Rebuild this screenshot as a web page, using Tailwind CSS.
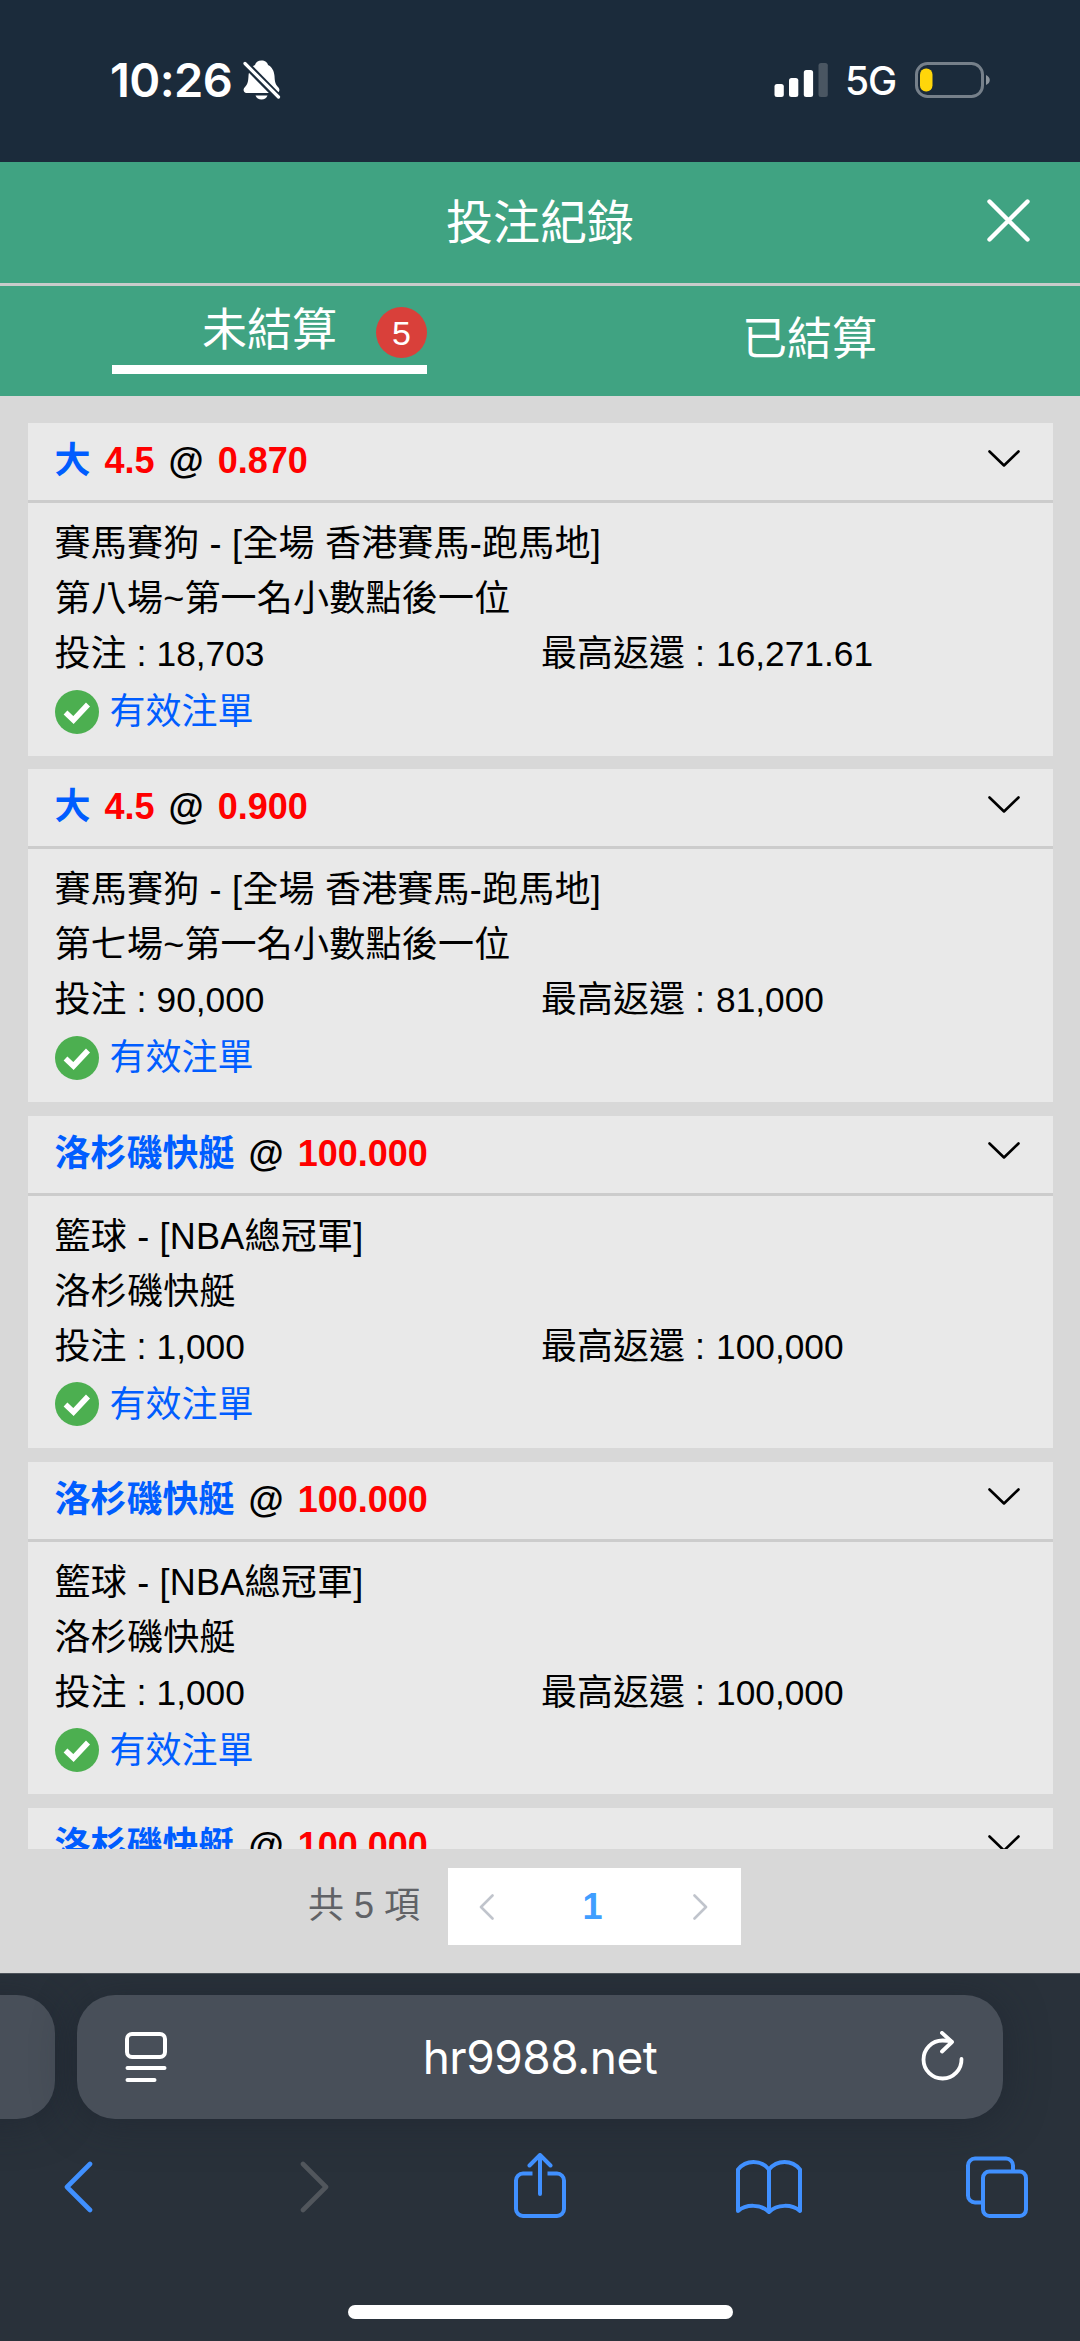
<!DOCTYPE html>
<html lang="zh-Hant">
  <head>
    <meta charset="utf-8" />
    <meta name="viewport" content="width=device-width, initial-scale=1.0" />
    <title>投注紀錄</title>
    <script src="https://cdn.jsdelivr.net/npm/@tailwindcss/browser@4"></script>
  </head>
  <body
    class="flex h-[2341px] w-[1080px] flex-col overflow-hidden bg-[#d8d8d8] font-['Liberation_Sans','Noto_Sans_CJK_TC',sans-serif] text-black"
  >
    <!-- Status bar -->
    <div
      class="flex h-[162px] shrink-0 items-center bg-[#1b2b3b] pr-[90px] pb-[2px] pl-[110px] text-white"
    >
      <span
        class="w-[133px] font-['Inter',sans-serif] text-[47px] font-semibold tracking-[-0.600px] whitespace-nowrap"
        >10:26</span
      >
      <svg class="h-[40px] w-[38px]" viewBox="0 0 38 40" fill="none">
        <path
          d="M18.500 0.500c-3.500 0-6 2-6.500 4.500-4 2-6.200 6-6.500 11-.3 6-1 8.500-3.500 11-2.500 2.500-1.500 6 1.500 6h30c3 0 4-3.500 1.500-6-2.500-2.500-3.200-5-3.500-11-.3-5-2.500-9-6.500-11-.5-2.500-3-4.500-6.500-4.500z"
          fill="#fff"
        />
        <path d="M12.500 35.500h12c-1 2.500-3 4-6 4s-5-1.500-6-4z" fill="#fff" />
        <path d="M-1 0.500L38 40" stroke="#1b2b3b" stroke-width="7.500" />
        <path
          d="M2 3.500L35.500 37"
          stroke="#fff"
          stroke-width="3.200"
          stroke-linecap="round"
        />
      </svg>
      <div class="ml-auto flex items-center">
        <svg class="h-[36px] w-[54px]" viewBox="0 0 54 36" fill="#fff">
          <rect x="0.500" y="22" width="9.300" height="13" rx="2.500" />
          <rect x="15" y="16" width="9.300" height="19" rx="2.500" />
          <rect x="29.800" y="8" width="9.300" height="27" rx="2.500" />
          <rect x="44.500" y="1" width="9.300" height="34" rx="2.500" fill="#4a5662" />
        </svg>
        <span
          class="mt-[3px] ml-[17px] w-[70px] font-['Inter',sans-serif] text-[39px] font-medium tracking-[-1px]"
          >5G</span
        >
        <svg class="h-[36px] w-[75px]" viewBox="0 0 75 36" fill="none">
          <rect x="1.500" y="1.500" width="66" height="33" rx="11" stroke="#76808a" stroke-width="3" />
          <rect x="5" y="6.500" width="12.500" height="23" rx="6" fill="#ffd60a" />
          <path d="M71 13c5 2 5 8 0 10z" fill="#8d959d" />
        </svg>
      </div>
    </div>

    <!-- Title -->
    <header
      class="relative flex h-[124px] shrink-0 items-center justify-center border-b-[3px] border-[#c9cccb] bg-[#40a382] text-[47px] leading-none text-white"
    >
      <h1>投注紀錄</h1>
      <svg
        class="absolute top-[37px] right-[50px] h-[43px] w-[43px]"
        viewBox="0 0 43 43"
        fill="none"
        stroke="#fff"
        stroke-width="4.400"
        stroke-linecap="round"
      >
        <path d="M2.500 2.500l38 38M40.500 2.500l-38 38" />
      </svg>
    </header>

    <!-- Tabs -->
    <nav
      class="grid h-[109.500px] shrink-0 grid-cols-2 bg-[#40a382] text-[45px] leading-none text-white"
    >
      <div class="flex justify-center">
        <div
          class="relative mr-[1px] flex h-[88px] w-[315px] items-center justify-center border-b-[9px] border-white pt-[10px]"
        >
          <span>未結算</span>
          <span
            class="absolute top-[21px] right-0 flex h-[51px] w-[51px] items-center justify-center rounded-full bg-[#d9403a] text-[34px]"
            >5</span
          >
        </div>
      </div>
      <div class="flex items-center justify-center pr-[1px] pb-[2px]">
        已結算
      </div>
    </nav>

    <!-- Bet list -->
    <main
      id="bets"
      class="flex h-[1453px] shrink-0 flex-col gap-[13.750px] overflow-hidden px-[27.500px] pt-[27.500px] text-[36px]"
    ></main>

    <!-- Pagination -->
    <div
      class="flex h-[124.500px] shrink-0 items-start pt-[19.500px] pl-[308px] text-[36px] text-[#606266]"
    >
      <span class="w-[140px] leading-[76px]">共 5 項</span>
      <div class="flex h-[77px] w-[293px] items-center bg-white">
        <svg
          class="ml-[31px] h-[26px] w-[15px]"
          viewBox="0 0 15 26"
          fill="none"
          stroke="#c0c4cc"
          stroke-width="2.600"
          stroke-linecap="round"
          stroke-linejoin="round"
        >
          <path d="M13.500 1.500L2 13l11.500 11.500" />
        </svg>
        <span class="flex-1 pr-[2px] text-center font-bold text-[#409eff]">1</span>
        <svg
          class="mr-[33px] h-[26px] w-[15px]"
          viewBox="0 0 15 26"
          fill="none"
          stroke="#c0c4cc"
          stroke-width="2.600"
          stroke-linecap="round"
          stroke-linejoin="round"
        >
          <path d="M1.500 1.500L13 13L1.500 24.500" />
        </svg>
      </div>
    </div>

    <!-- Browser bar -->
    <footer
      class="flex flex-1 flex-col overflow-hidden border-t border-[#4c5259] bg-[#29313a]"
    >
      <div class="mt-[21px] flex h-[124px] shrink-0">
        <div
          class="-ml-[60px] w-[115px] shrink-0 rounded-[38px] bg-[#484f59] shadow-[0_4px_40px_rgba(28,34,46,0.55)]"
        ></div>
        <div
          class="ml-[22px] flex w-[926px] shrink-0 items-center justify-between rounded-[38px] bg-[#484f59] pr-[39px] pl-[48px] shadow-[0_4px_40px_rgba(28,34,46,0.55)]"
        >
          <svg
            class="h-[50px] w-[42px]"
            viewBox="0 0 42 50"
            fill="none"
            stroke="#fff"
            stroke-width="4"
            stroke-linecap="round"
          >
            <rect x="2" y="2" width="38" height="23" rx="5" />
            <path d="M2.500 36h37M2.500 48h27" />
          </svg>
          <span
            class="mr-[7px] font-['Inter',sans-serif] text-[46px] tracking-[-0.500px] text-white"
            >hr9988.net</span
          >
          <svg
            class="h-[52px] w-[44px]"
            viewBox="0 0 44 52"
            fill="none"
            stroke="#fff"
            stroke-width="3.800"
            stroke-linecap="round"
            stroke-linejoin="round"
          >
            <path d="M41.500 28A19 19 0 1 1 22.500 9.500q5 0 9 1" />
            <path d="M22 1.900L32 11L22 20.500" />
          </svg>
        </div>
      </div>

      <div class="mt-[34px] flex h-[66px] shrink-0 items-start">
        <svg class="mt-[8px] ml-[63px] h-[52px] w-[31px]" viewBox="0 0 31 52" fill="none" stroke="#4090ff" stroke-width="4.600" stroke-linecap="round" stroke-linejoin="round">
          <path d="M27 3L4 26l23 23" />
        </svg>
        <svg class="mt-[8px] ml-[205px] h-[52px] w-[31px]" viewBox="0 0 31 52" fill="none" stroke="#51565c" stroke-width="4.600" stroke-linecap="round" stroke-linejoin="round">
          <path d="M4 3l23 23L4 49" />
        </svg>
        <svg class="ml-[184px] h-[66px] w-[52px]" viewBox="0 0 52 66" fill="none" stroke="#4090ff" stroke-width="4">
          <path d="M18.500 20.500H9a7 7 0 0 0-7 7V56a7 7 0 0 0 7 7h34a7 7 0 0 0 7-7V27.500a7 7 0 0 0-7-7h-9.500" />
          <path d="M26 41V3M15.500 12.500L26 2l10.500 10.500" stroke-linecap="round" stroke-linejoin="round" />
        </svg>
        <svg class="mt-[7px] ml-[170px] h-[55px] w-[66px]" viewBox="0 0 66 55" fill="none" stroke="#4090ff" stroke-width="4" stroke-linecap="round" stroke-linejoin="round">
          <path d="M33 9.500C25-.5 10-.5 2 9.500V51C10 44 25 44 33 52C41 44 56 44 64 51V9.500C56-.5 41-.5 33 9.500zV52" />
        </svg>
        <svg class="mt-[3px] ml-[164px] h-[62px] w-[62px]" viewBox="0 0 62 62" fill="none" stroke="#4090ff" stroke-width="4">
          <path d="M15 46.500H9a7 7 0 0 1-7-7V9.500a7 7 0 0 1 7-7h31a7 7 0 0 1 7 7V15" />
          <rect x="17" y="15.500" width="43" height="44.500" rx="6.500" />
        </svg>
      </div>

      <div
        class="mx-auto mt-[86px] h-[14px] w-[385px] shrink-0 rounded-full bg-white"
      ></div>
    </footer>

    <script>
      const bets = [
        { pick: '大', line: '4.5', odds: '0.870', league: '賽馬賽狗 - [全場 香港賽馬-跑馬地]', match: '第八場~第一名小數點後一位', stake: '18,703', win: '16,271.61' },
        { pick: '大', line: '4.5', odds: '0.900', league: '賽馬賽狗 - [全場 香港賽馬-跑馬地]', match: '第七場~第一名小數點後一位', stake: '90,000', win: '81,000' },
        { pick: '洛杉磯快艇', odds: '100.000', league: '籃球 - [NBA總冠軍]', match: '洛杉磯快艇', stake: '1,000', win: '100,000' },
        { pick: '洛杉磯快艇', odds: '100.000', league: '籃球 - [NBA總冠軍]', match: '洛杉磯快艇', stake: '1,000', win: '100,000' },
        { pick: '洛杉磯快艇', odds: '100.000', league: '籃球 - [NBA總冠軍]', match: '洛杉磯快艇', stake: '1,000', win: '100,000' },
      ]

      document.querySelector('#bets').innerHTML = bets
        .map(
          (bet) => `
        <section class="h-[332.500px] shrink-0 bg-[#e9e9e9]">
          <div class="flex h-[80px] items-center gap-[14px] border-b-[3px] border-[#cccccc] pr-[33px] pl-[27px] pb-[1px] font-bold leading-none">
            <span class="text-[#005dff]">${bet.pick}</span>
            ${bet.line ? `<span class="text-[#ff0000]">${bet.line}</span>` : ''}
            <span>@</span>
            <span class="text-[#ff0000]">${bet.odds}</span>
            <svg class="ml-auto mb-[6px] h-[17px] w-[32px]" viewBox="0 0 32 17" fill="none" stroke="#000" stroke-width="2.600" stroke-linecap="round" stroke-linejoin="round">
              <path d="M1.500 1.500L16 15.500L30.500 1.500" />
            </svg>
          </div>
          <div class="px-[27px] pt-[13px] leading-[55px]">
            <p class="tracking-[0.220px]">${bet.league}</p>
            <p class="tracking-[0.220px]">${bet.match}</p>
            <div class="grid grid-cols-2">
              <span>投注 : <span class="text-[35.300px]">${bet.stake}</span></span>
              <span class="pl-[1px]">最高返還 : <span class="ml-[1px] text-[35.300px]">${bet.win}</span></span>
            </div>
            <div class="mt-[3px] flex items-center text-[#005dff]">
              <svg class="mr-[11px] h-[44px] w-[44px]" viewBox="0 0 44 44">
                <circle cx="22" cy="22" r="22" fill="#4caf50" />
                <path d="M10.500 22.500L18.500 30L33 14.500" fill="none" stroke="#fff" stroke-width="5.500" />
              </svg>
              <span>有效注單</span>
            </div>
          </div>
        </section>`
        )
        .join('')
    </script>
  </body>
</html>
